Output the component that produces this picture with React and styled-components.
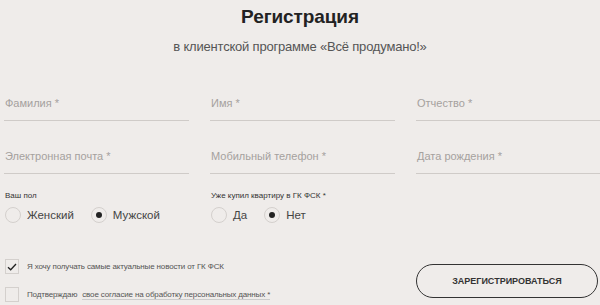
import styled, { createGlobalStyle } from "styled-components";

const Global = createGlobalStyle`
  body {
    margin: 0;
    background: #efecea;
    font-family: "Liberation Sans", Arial, sans-serif;
  }
`;

const Page = styled.div`
  width: 600px;
  height: 305px;
  overflow: hidden;
  background: #efecea;
  padding-left: 4px;
  box-sizing: border-box;
`;

const Header = styled.div`
  text-align: center;
  padding-top: 5px;
  padding-right: 4px;
`;

const Title = styled.h1`
  margin: 0;
  font-size: 19px;
  font-weight: 700;
  color: #222;
  line-height: 24px;
  letter-spacing: -0.1px;
`;

const Subtitle = styled.p`
  margin: 10px 0 0;
  font-size: 13px;
  color: #555;
  line-height: 16px;
  letter-spacing: -0.2px;
`;

const Grid = styled.div`
  display: grid;
  grid-template-columns: 185px 185px 185px;
  column-gap: 21px;
`;

const Fields = styled(Grid)`
  margin-top: 41px;
  row-gap: 28px;
`;

const Field = styled.div`
  height: 25px;
  border-bottom: 1px solid #cfcbc8;
  box-sizing: border-box;
  padding-left: 1px;
  font-size: 11px;
  color: #a5a19e;
  line-height: 14px;
`;

const Options = styled(Grid)`
  margin-top: 17px;
`;

const Group = styled.div`
  display: flex;
  flex-direction: column;
  gap: 6px;
`;

const SmallLabel = styled.div`
  font-size: 8px;
  color: #333;
  line-height: 10px;
  padding-left: 1px;
`;

const RadioRow = styled.div`
  display: flex;
  align-items: center;
  gap: 16px;
`;

const Radio = styled.label`
  display: flex;
  align-items: center;
  gap: 6px;
  font-size: 11.5px;
  color: #444;
`;

const Circle = styled.span`
  width: 16px;
  height: 16px;
  border-radius: 50%;
  border: 1px solid #d4d0cd;
  box-sizing: border-box;
  display: flex;
  align-items: center;
  justify-content: center;
  margin-left: 1px;
  &::after {
    content: "";
    width: 6px;
    height: 6px;
    border-radius: 50%;
    background: ${(p) => (p.$on ? "#222" : "transparent")};
  }
`;

const Bottom = styled(Grid)`
  margin-top: 36px;
  align-items: center;
`;

const Checks = styled.div`
  grid-column: 1 / span 2;
  display: flex;
  flex-direction: column;
  gap: 13px;
`;

const Check = styled.label`
  display: flex;
  align-items: center;
  gap: 8px;
  font-size: 8px;
  color: #555;
  padding-left: 1px;
  letter-spacing: -0.15px;
`;

const Box = styled.span`
  width: 14px;
  height: 15px;
  border: 1px solid #d4d0cd;
  box-sizing: border-box;
  display: flex;
  align-items: center;
  justify-content: center;
`;

const Link = styled.span`
  margin-left: 5px;
  border-bottom: 1px solid #ccc;
`;

const Button = styled.button`
  width: 182px;
  height: 34px;
  border: 1px solid #333;
  border-radius: 17px;
  background: transparent;
  font-family: "Liberation Sans", Arial, sans-serif;
  font-weight: 700;
  font-size: 9px;
  color: #333;
  cursor: pointer;
`;

const CheckMark = () => (
  <svg width="10" height="8" viewBox="0 0 10 8">
    <path d="M1 4.2 L3.7 6.8 L9 1" fill="none" stroke="#222" strokeWidth="1.3" />
  </svg>
);

export default function App() {
  return (
    <Page>
      <Global />
      <Header>
        <Title>Регистрация</Title>
        <Subtitle>в клиентской программе «Всё продумано!»</Subtitle>
      </Header>
      <Fields>
        <Field>Фамилия *</Field>
        <Field>Имя *</Field>
        <Field>Отчество *</Field>
        <Field>Электронная почта *</Field>
        <Field>Мобильный телефон *</Field>
        <Field>Дата рождения *</Field>
      </Fields>
      <Options>
        <Group>
          <SmallLabel>Ваш пол</SmallLabel>
          <RadioRow>
            <Radio><Circle />Женский</Radio>
            <Radio><Circle $on />Мужской</Radio>
          </RadioRow>
        </Group>
        <Group>
          <SmallLabel>Уже купил квартиру в ГК ФСК *</SmallLabel>
          <RadioRow>
            <Radio><Circle />Да</Radio>
            <Radio><Circle $on />Нет</Radio>
          </RadioRow>
        </Group>
      </Options>
      <Bottom>
        <Checks>
          <Check><Box><CheckMark /></Box><span>Я хочу получать самые актуальные новости от ГК ФСК</span></Check>
          <Check><Box /><span>Подтверждаю<Link>свое согласие на обработку персональных данных *</Link></span></Check>
        </Checks>
        <Button>ЗАРЕГИСТРИРОВАТЬСЯ</Button>
      </Bottom>
    </Page>
  );
}
